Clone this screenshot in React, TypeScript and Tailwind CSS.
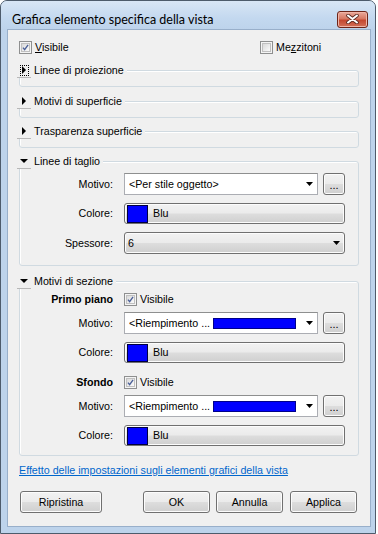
import React from "react";

const btnBg =
  "bg-[linear-gradient(#f2f2f2_0%,#ebebeb_48%,#dddddd_52%,#cfcfcf_100%)] border border-[#707070] rounded-[3px] shadow-[inset_0_0_0_1px_#fcfcfc]";

function Arrow() {
  return (
    <svg width="7" height="4" viewBox="0 0 7 4" className="shrink-0">
      <polygon points="0,0 7,0 3.5,4" fill="#000" />
    </svg>
  );
}

function Check({ checked }: { checked: boolean }) {
  return (
    <span className="w-[13px] h-[13px] shrink-0 border border-[#8e8f8f] bg-[#f4f4f4] flex items-center justify-center">
      <span className="w-[9px] h-[9px] border border-[#c0c0c0] bg-[linear-gradient(135deg,#d9d9d9,#fbfbfb)] flex items-center justify-center">
        {checked && (
          <svg width="9" height="9" viewBox="0 0 9 9">
            <path d="M1.2 4.6 L3.4 7.2 L7.8 1" stroke="#4a5f97" strokeWidth="1.7" fill="none" />
          </svg>
        )}
      </span>
    </span>
  );
}

function Expander({ open, focused }: { open: boolean; focused?: boolean }) {
  return (
    <span className="w-[14px] h-[14px] shrink-0 flex items-center justify-center border-b border-[#b8b8b8] bg-[#f0f0f0]">
      <span
        className={
          focused
            ? "w-[9px] h-[11px] border border-dotted border-black flex items-center justify-center"
            : "flex items-center justify-center"
        }
      >
        {open ? (
          <svg width="8" height="4" viewBox="0 0 8 4">
            <polygon points="0,0 8,0 4,4" fill="#000" />
          </svg>
        ) : (
          <svg width="4" height="8" viewBox="0 0 4 8">
            <polygon points="0,0 4,4 0,8" fill="#000" />
          </svg>
        )}
      </span>
    </span>
  );
}

function Group({
  title,
  open,
  focused,
  className,
  children,
}: {
  title: string;
  open: boolean;
  focused?: boolean;
  className: string;
  children?: React.ReactNode;
}) {
  return (
    <div
      className={
        "relative mx-[11px] border border-[#d0dae1] rounded-[3px] shadow-[inset_1px_1px_0_#ffffff] " +
        className
      }
    >
      <div className="absolute left-[-3px] top-[-8px] h-[15px] flex items-center bg-[#f0f0f0] pr-[3px]">
        <Expander open={open} focused={focused} />
        <span className="ml-[3px] leading-[13px]">{title}</span>
      </div>
      {children}
    </div>
  );
}

function Label({ children, bold }: { children: React.ReactNode; bold?: boolean }) {
  return (
    <span className={"w-[93px] shrink-0 text-right leading-[13px] " + (bold ? "font-bold" : "")}>
      {children}
    </span>
  );
}

function EditCombo({ children }: { children: React.ReactNode }) {
  return (
    <div className="flex items-center flex-1">
      <div className="w-[194px] h-[22px] border border-[#abadb3] border-t-[#8e8f8f] bg-white flex items-center pl-[4px] pr-[4px]">
        <span className="flex-1 flex items-center leading-[13px] whitespace-nowrap overflow-hidden">
          {children}
        </span>
        <Arrow />
      </div>
      <div className={"ml-[5px] w-[22px] h-[22px] flex items-center justify-center " + btnBg}>
        <span className="leading-[13px] text-[11px] tracking-[0px] mt-[2px]">...</span>
      </div>
    </div>
  );
}

function ColorButton() {
  return (
    <div className={"flex-1 h-[21px] flex items-center pl-[2px] " + btnBg}>
      <span className="w-[21px] h-[18px] bg-[#0000ff] border border-[#000040]" />
      <span className="ml-[5px] leading-[13px]">Blu</span>
    </div>
  );
}

function Row({ label, bold, children, className }: { label: string; bold?: boolean; children: React.ReactNode; className?: string }) {
  return (
    <div className={"flex items-center " + (className ?? "")}>
      <Label bold={bold}>{label}</Label>
      <div className="ml-[11px] flex-1 flex items-center">{children}</div>
    </div>
  );
}

function DlgButton({ children, className }: { children: React.ReactNode; className: string }) {
  return (
    <div className={"h-[22px] flex items-center justify-center leading-[13px] " + btnBg + " " + className}>
      {children}
    </div>
  );
}

export default function App() {
  return (
    <div className="w-[378px] h-[534px] bg-white font-[family-name:Liberation_Sans,Arial,sans-serif] text-[10.7px] text-black">
      <div className="w-[376px] h-[534px] rounded-t-[7px] border border-[#4d5b6b] bg-[#bdd3eb] flex flex-col overflow-hidden">
        {/* Title bar */}
        <div className="h-[29px] shrink-0 flex items-center pl-[11px] pr-[7px] bg-[linear-gradient(#d8e6f5,#c3d8ef_60%,#bdd3eb)]">
          <span className="text-[12.5px] font-[family-name:Lato,sans-serif] flex-1 mt-[8px] leading-[14px]">
            Grafica elemento specifica della vista
          </span>
          <div className="w-[31px] h-[17px] mt-[7px] rounded-[3px] border border-[#6d2418] bg-[linear-gradient(#e9a99b,#d77862_45%,#c4472f_55%,#d27059)] flex items-center justify-center shadow-[inset_0_0_0_1px_#efb4a6]">
            <svg width="13" height="10" viewBox="0 0 13 10">
              <path d="M2 1.5 L11 8.5 M11 1.5 L2 8.5" stroke="#5a2a22" strokeWidth="3.6" strokeLinecap="round" />
              <path d="M2 1.5 L11 8.5 M11 1.5 L2 8.5" stroke="#ffffff" strokeWidth="2" strokeLinecap="round" />
            </svg>
          </div>
        </div>
        {/* Client */}
        <div className="ml-[7px] w-[362px] h-[496px] bg-[#f0f0f0] shadow-[0_0_0_1px_#98afca] flex flex-col">
          <div className="mt-[11px] pl-[11px] flex items-center h-[13px]">
            <div className="w-[241px] flex items-center">
              <Check checked />
              <span className="ml-[3px] leading-[13px]">
                <u>V</u>isibile
              </span>
            </div>
            <div className="flex items-center">
              <Check checked={false} />
              <span className="ml-[3px] leading-[13px]">
                Me<u>z</u>zitoni
              </span>
            </div>
          </div>

          <Group title="Linee di proiezione" open={false} focused className="mt-[16px] h-[17px]" />
          <Group title="Motivi di superficie" open={false} className="mt-[14px] h-[17px]" />
          <Group title="Trasparenza superficie" open={false} className="mt-[13px] h-[17px]" />

          <Group title="Linee di taglio" open className="mt-[13px] h-[105px]">
            <div className="pt-[11px] pr-[13px] flex flex-col">
              <Row label="Motivo:">
                <EditCombo>&lt;Per stile oggetto&gt;</EditCombo>
              </Row>
              <Row label="Colore:" className="mt-[8px]">
                <ColorButton />
              </Row>
              <Row label="Spessore:" className="mt-[8px]">
                <div className={"flex-1 h-[22px] flex items-center pl-[3px] pr-[4px] " + btnBg}>
                  <span className="flex-1 leading-[13px]">6</span>
                  <Arrow />
                </div>
              </Row>
            </div>
          </Group>

          <Group title="Motivi di sezione" open className="mt-[15px] h-[175px]">
            <div className="pt-[11px] pr-[13px] flex flex-col">
              <Row label="Primo piano" bold>
                <Check checked />
                <span className="ml-[3px] leading-[13px]">Visibile</span>
              </Row>
              <Row label="Motivo:" className="mt-[6px]">
                <EditCombo>
                  &lt;Riempimento ...
                  <span className="ml-[3px] w-[83px] h-[11px] bg-[#0000ff] border border-[#00008a] shrink-0" />
                </EditCombo>
              </Row>
              <Row label="Colore:" className="mt-[8px]">
                <ColorButton />
              </Row>
              <Row label="Sfondo" bold className="mt-[13px]">
                <Check checked />
                <span className="ml-[3px] leading-[13px]">Visibile</span>
              </Row>
              <Row label="Motivo:" className="mt-[6px]">
                <EditCombo>
                  &lt;Riempimento ...
                  <span className="ml-[3px] w-[83px] h-[11px] bg-[#0000ff] border border-[#00008a] shrink-0" />
                </EditCombo>
              </Row>
              <Row label="Colore:" className="mt-[8px]">
                <ColorButton />
              </Row>
            </div>
          </Group>

          <div className="mt-[8px] pl-[11px] leading-[13px]">
            <span className="text-[#0066cc] underline">
              Effetto delle impostazioni sugli elementi grafici della vista
            </span>
          </div>

          <div className="mt-[14px] pl-[12px] flex">
            <DlgButton className="w-[82px]">Ripristina</DlgButton>
            <DlgButton className="w-[67px] ml-[41px]">OK</DlgButton>
            <DlgButton className="w-[67px] ml-[6px]">Annulla</DlgButton>
            <DlgButton className="w-[67px] ml-[7px]">Applica</DlgButton>
          </div>
        </div>
      </div>
    </div>
  );
}
